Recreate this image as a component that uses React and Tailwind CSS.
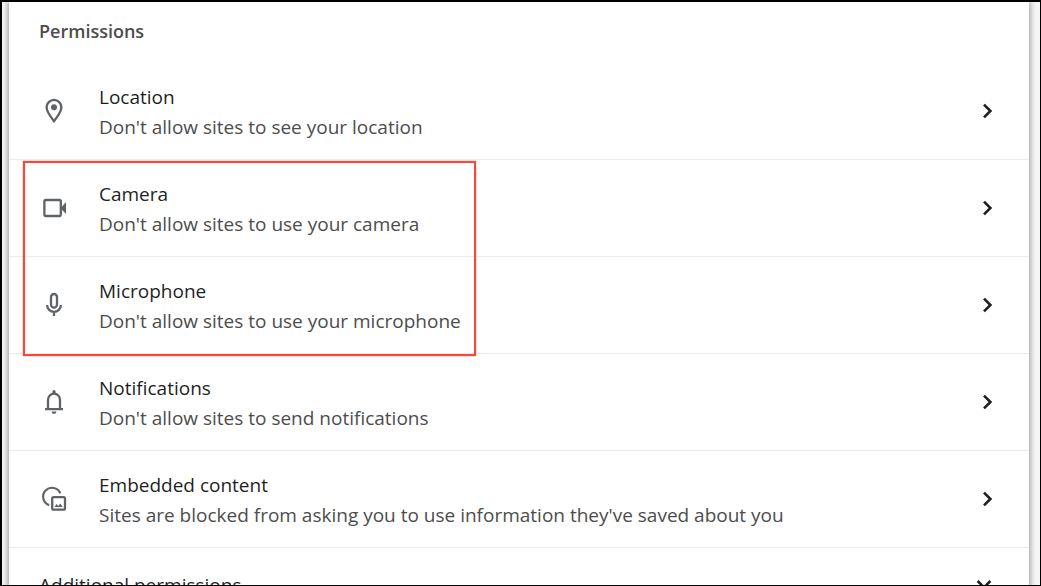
import React from 'react';

const LocationIcon = () => (
  <svg viewBox="0 0 30 30" className="size-[30px]" fill="none" aria-hidden="true">
    <path
      d="M15 25.2C11.2 20.4 7.6 15.6 7.6 11.3a7.4 7.4 0 0 1 14.8 0C22.4 15.6 18.8 20.4 15 25.2Z"
      stroke="currentColor"
      strokeWidth="2.3"
    />
    <circle cx="15" cy="11.3" r="3" fill="currentColor" />
  </svg>
);

const CameraIcon = () => (
  <svg viewBox="0 0 30 30" className="size-[30px]" fill="none" aria-hidden="true">
    <rect x="5.4" y="7" width="16.4" height="16" rx="1.4" stroke="currentColor" strokeWidth="2.3" />
    <path d="M22 14.8 27 9v12l-5-5.2Z" fill="currentColor" />
  </svg>
);

const MicrophoneIcon = () => (
  <svg viewBox="0 0 30 30" className="size-[30px]" fill="none" stroke="currentColor" strokeWidth="2.3" aria-hidden="true">
    <rect x="12" y="4" width="6" height="13.6" rx="3" />
    <path d="M8.1 15a6.9 6.9 0 0 0 13.8 0M15 22v4" />
  </svg>
);

const BellIcon = () => (
  <svg viewBox="0 0 30 30" className="size-[30px]" fill="none" aria-hidden="true">
    <path d="M9 22v-9a6 6.4 0 0 1 12 0v9M6 22.2h18" stroke="currentColor" strokeWidth="2.3" />
    <path d="M13.4 6.6V4.6a1.6 1.6 0 0 1 3.2 0v2ZM12.6 24.6h4.8a2.4 2.4 0 0 1-4.8 0Z" fill="currentColor" />
  </svg>
);

const EmbeddedIcon = () => (
  <svg viewBox="0 0 30 30" className="size-[30px]" fill="none" aria-hidden="true">
    <path d="M10.1 21.1A8.9 8.9 0 1 1 21.3 9.4" stroke="currentColor" strokeWidth="2.2" />
    <rect x="13.2" y="13.2" width="12.8" height="12.4" rx="1.4" stroke="currentColor" strokeWidth="2.3" />
    <path d="m15.4 23 2.2-3 1.6 2 2-2.6 2.6 3.6Z" fill="currentColor" />
  </svg>
);

const ChevronIcon = ({ className }) => (
  <svg viewBox="0 0 16 16" className={className} fill="none" stroke="#1f1f1f" strokeWidth="2.6" aria-hidden="true">
    <path d="m4 1.6 6.4 6.4L4 14.4" />
  </svg>
);

const Row = ({ icon: Icon, title, text }) => (
  <button type="button" className="flex w-full items-center border-b border-[#ebebeb] py-[17px] pr-[33px] pl-[30px] text-left">
    <span className="text-[#5f6368]">
      <Icon />
    </span>
    <span className="ml-[30px] flex-1 pt-0.5">
      <span className="block text-[#1f1f1f]">{title}</span>
      <span className="block text-[#4d4d4d]">{text}</span>
    </span>
    <ChevronIcon className="size-4" />
  </button>
);

const App = () => {
  return (
    <div className="h-screen overflow-hidden border-t-2 border-r border-b border-l-2 border-black bg-[#f6f6f6] pr-[11px] pl-[7px] font-['Open_Sans','Noto_Sans',sans-serif] text-[19px] leading-[30px]">
      <main className="bg-white shadow-[0_0_6px_1px_rgba(0,0,0,0.4)]">
        <h2 className="px-[30px] pt-[14px] pb-[17px] text-[18px] font-semibold text-[#4d4d4d]">Permissions</h2>
        <Row icon={LocationIcon} title="Location" text="Don't allow sites to see your location" />
        <div className="relative">
          <Row icon={CameraIcon} title="Camera" text="Don't allow sites to use your camera" />
          <Row icon={MicrophoneIcon} title="Microphone" text="Don't allow sites to use your microphone" />
          <div className="pointer-events-none absolute top-px -bottom-0.5 left-[14px] w-[453px] border-2 border-[#ff4438] shadow-[0_0_1px_#ff4438]" />
        </div>
        <Row icon={BellIcon} title="Notifications" text="Don't allow sites to send notifications" />
        <Row
          icon={EmbeddedIcon}
          title="Embedded content"
          text="Sites are blocked from asking you to use information they've saved about you"
        />
        <button type="button" className="flex w-full items-center justify-between py-[22px] pr-[37px] pl-[30px] text-left text-[#1f1f1f]">
          Additional permissions
          <ChevronIcon className="size-4 rotate-90" />
        </button>
      </main>
    </div>
  );
};

export default App;
